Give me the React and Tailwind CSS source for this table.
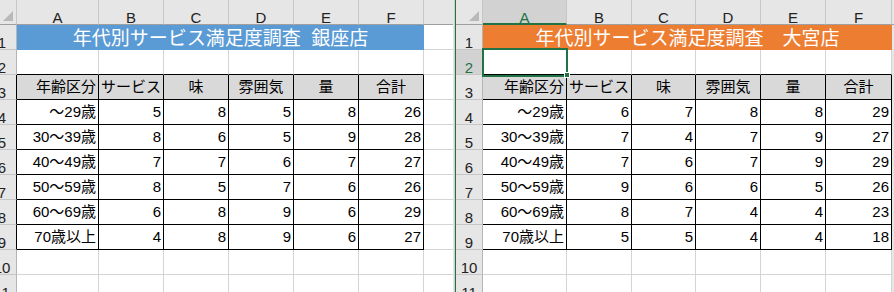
import React from 'react';

const ginza = [
  ['～29歳', 5, 8, 5, 8, 26],
  ['30～39歳', 8, 6, 5, 9, 28],
  ['40～49歳', 7, 7, 6, 7, 27],
  ['50～59歳', 8, 5, 7, 6, 26],
  ['60～69歳', 6, 8, 9, 6, 29],
  ['70歳以上', 4, 8, 9, 6, 27],
];

const omiya = [
  ['～29歳', 6, 7, 8, 8, 29],
  ['30～39歳', 7, 4, 7, 9, 27],
  ['40～49歳', 7, 6, 7, 9, 29],
  ['50～59歳', 9, 6, 6, 5, 26],
  ['60～69歳', 8, 7, 4, 4, 23],
  ['70歳以上', 5, 5, 4, 4, 18],
];

const heads = ['年齢区分', 'サービス', '味', '雰囲気', '量', '合計'];
const letters = ['A', 'B', 'C', 'D', 'E', 'F'];

const Corner = () => (
  <div className="relative bg-[#e6e6e6] border-r border-b border-r-[#c6c6c6] border-b-[#9f9f9f]">
    <svg className="absolute right-[3px] bottom-[3px]" width="10" height="10" viewBox="0 0 10 10">
      <polygon points="10,0 10,10 0,10" fill="#b9b9b9" />
    </svg>
  </div>
);

const RowHead = ({ n, shift, edge, active }) => (
  <div
    className={`flex overflow-hidden border-b border-r border-b-[#c6c6c6] ${
      edge ? 'border-r-black' : 'border-r-[#b5b5b5]'
    } ${active ? 'bg-[#d2d2d2] text-[#217346]' : 'bg-[#e6e6e6] text-[#222]'}`}
  >
    <div className={`${shift ? 'w-[26px] ml-[-11px]' : 'w-full'} shrink-0 text-center pt-[9px] leading-[17px]`}>
      {n}
    </div>
  </div>
);

function Pane({ grid, shift, title, fill, data, active, edgeBlack, tail }) {
  const rows = [];
  for (let r = 1; r <= 11; r++) {
    rows.push(
      <RowHead key={`h${r}`} n={r} shift={shift} edge={edgeBlack && r >= 3 && r <= 9} active={active && r === 2} />
    );
    if (r === 1) {
      rows.push(
        <div key="title" className={`col-span-6 flex items-center justify-center whitespace-pre pt-[2px] text-white text-[19px] leading-[22px] ${fill}`}>
          {title}
        </div>
      );
    } else {
      for (let c = 0; c < 6; c++) {
        const inTable = r >= 3 && r <= 9;
        let cls = 'flex items-center leading-[20px] text-black border-b border-r ';
        if (inTable) cls += 'border-black ';
        else if (r === 2) cls += 'border-b-black border-r-[#d4d4d4] ';
        else cls += 'border-[#d4d4d4] ';
        let text = '';
        if (r === 3) {
          cls += 'bg-[#d9d9d9] ';
          cls += c === 0 ? 'justify-end pr-[2px]' : 'justify-center';
          text = heads[c];
        } else if (inTable) {
          cls += 'bg-white justify-end pr-[2px]';
          text = data[r - 4][c];
        } else {
          cls += 'bg-white';
        }
        rows.push(
          <div key={`${r}-${c}`} className={cls}>
            {text}
          </div>
        );
      }
    }
    rows.push(<div key={`t${r}`} className={tail} />);
  }

  return (
    <div className={`relative grid auto-rows-[25px] overflow-hidden h-[292px] ${grid}`}>
      <Corner />
      {letters.map((l) => (
        <div
          key={l}
          className={`flex justify-center pt-[9px] leading-[17px] border-r border-r-[#c6c6c6] ${
            active && l === 'A'
              ? 'bg-[#d2d2d2] text-[#217346] border-b-2 border-b-[#217346]'
              : 'bg-[#e6e6e6] text-[#222] border-b border-b-[#9f9f9f]'
          }`}
        >
          {l}
        </div>
      ))}
      <div className={`bg-[#e6e6e6] border-b border-b-[#9f9f9f] ${tail.includes('bg-') ? '' : 'border-r border-r-[#c6c6c6]'}`} />
      {rows}
      {active && (
        <>
          <div className="absolute left-[26px] top-[48px] w-[86px] h-[29px] border-2 border-[#217346]" />
          <div className="absolute left-[108px] top-[72px] w-[6px] h-[6px] bg-[#217346] border border-white" />
        </>
      )}
    </div>
  );
}

export default function App() {
  return (
    <div className="flex w-[894px] h-[292px] overflow-hidden bg-white text-[15px] font-['Liberation_Sans','Noto_Sans_CJK_JP',sans-serif]">
      <Pane
        grid="grid-cols-[17px_82px_65px_65px_65px_65px_65px_29px] w-[453px]"
        shift
        title="年代別サービス満足度調査  銀座店"
        fill="bg-[#5b9bd5]"
        data={ginza}
        edgeBlack
        tail="bg-white border-b border-[#d4d4d4]"
      />
      <div className="w-[2px] bg-gradient-to-r from-[#f2f2f2] to-[#c4c4c4]" />
      <div className="w-[1px] bg-[#217346]" />
      <Pane
        grid="grid-cols-[27px_84px_65px_64px_65px_65px_66px_2px] w-[438px]"
        title="年代別サービス満足度調査　大宮店"
        fill="bg-[#ed7d31]"
        data={omiya}
        active
        tail="bg-[#e6e6e6]"
      />
    </div>
  );
}
